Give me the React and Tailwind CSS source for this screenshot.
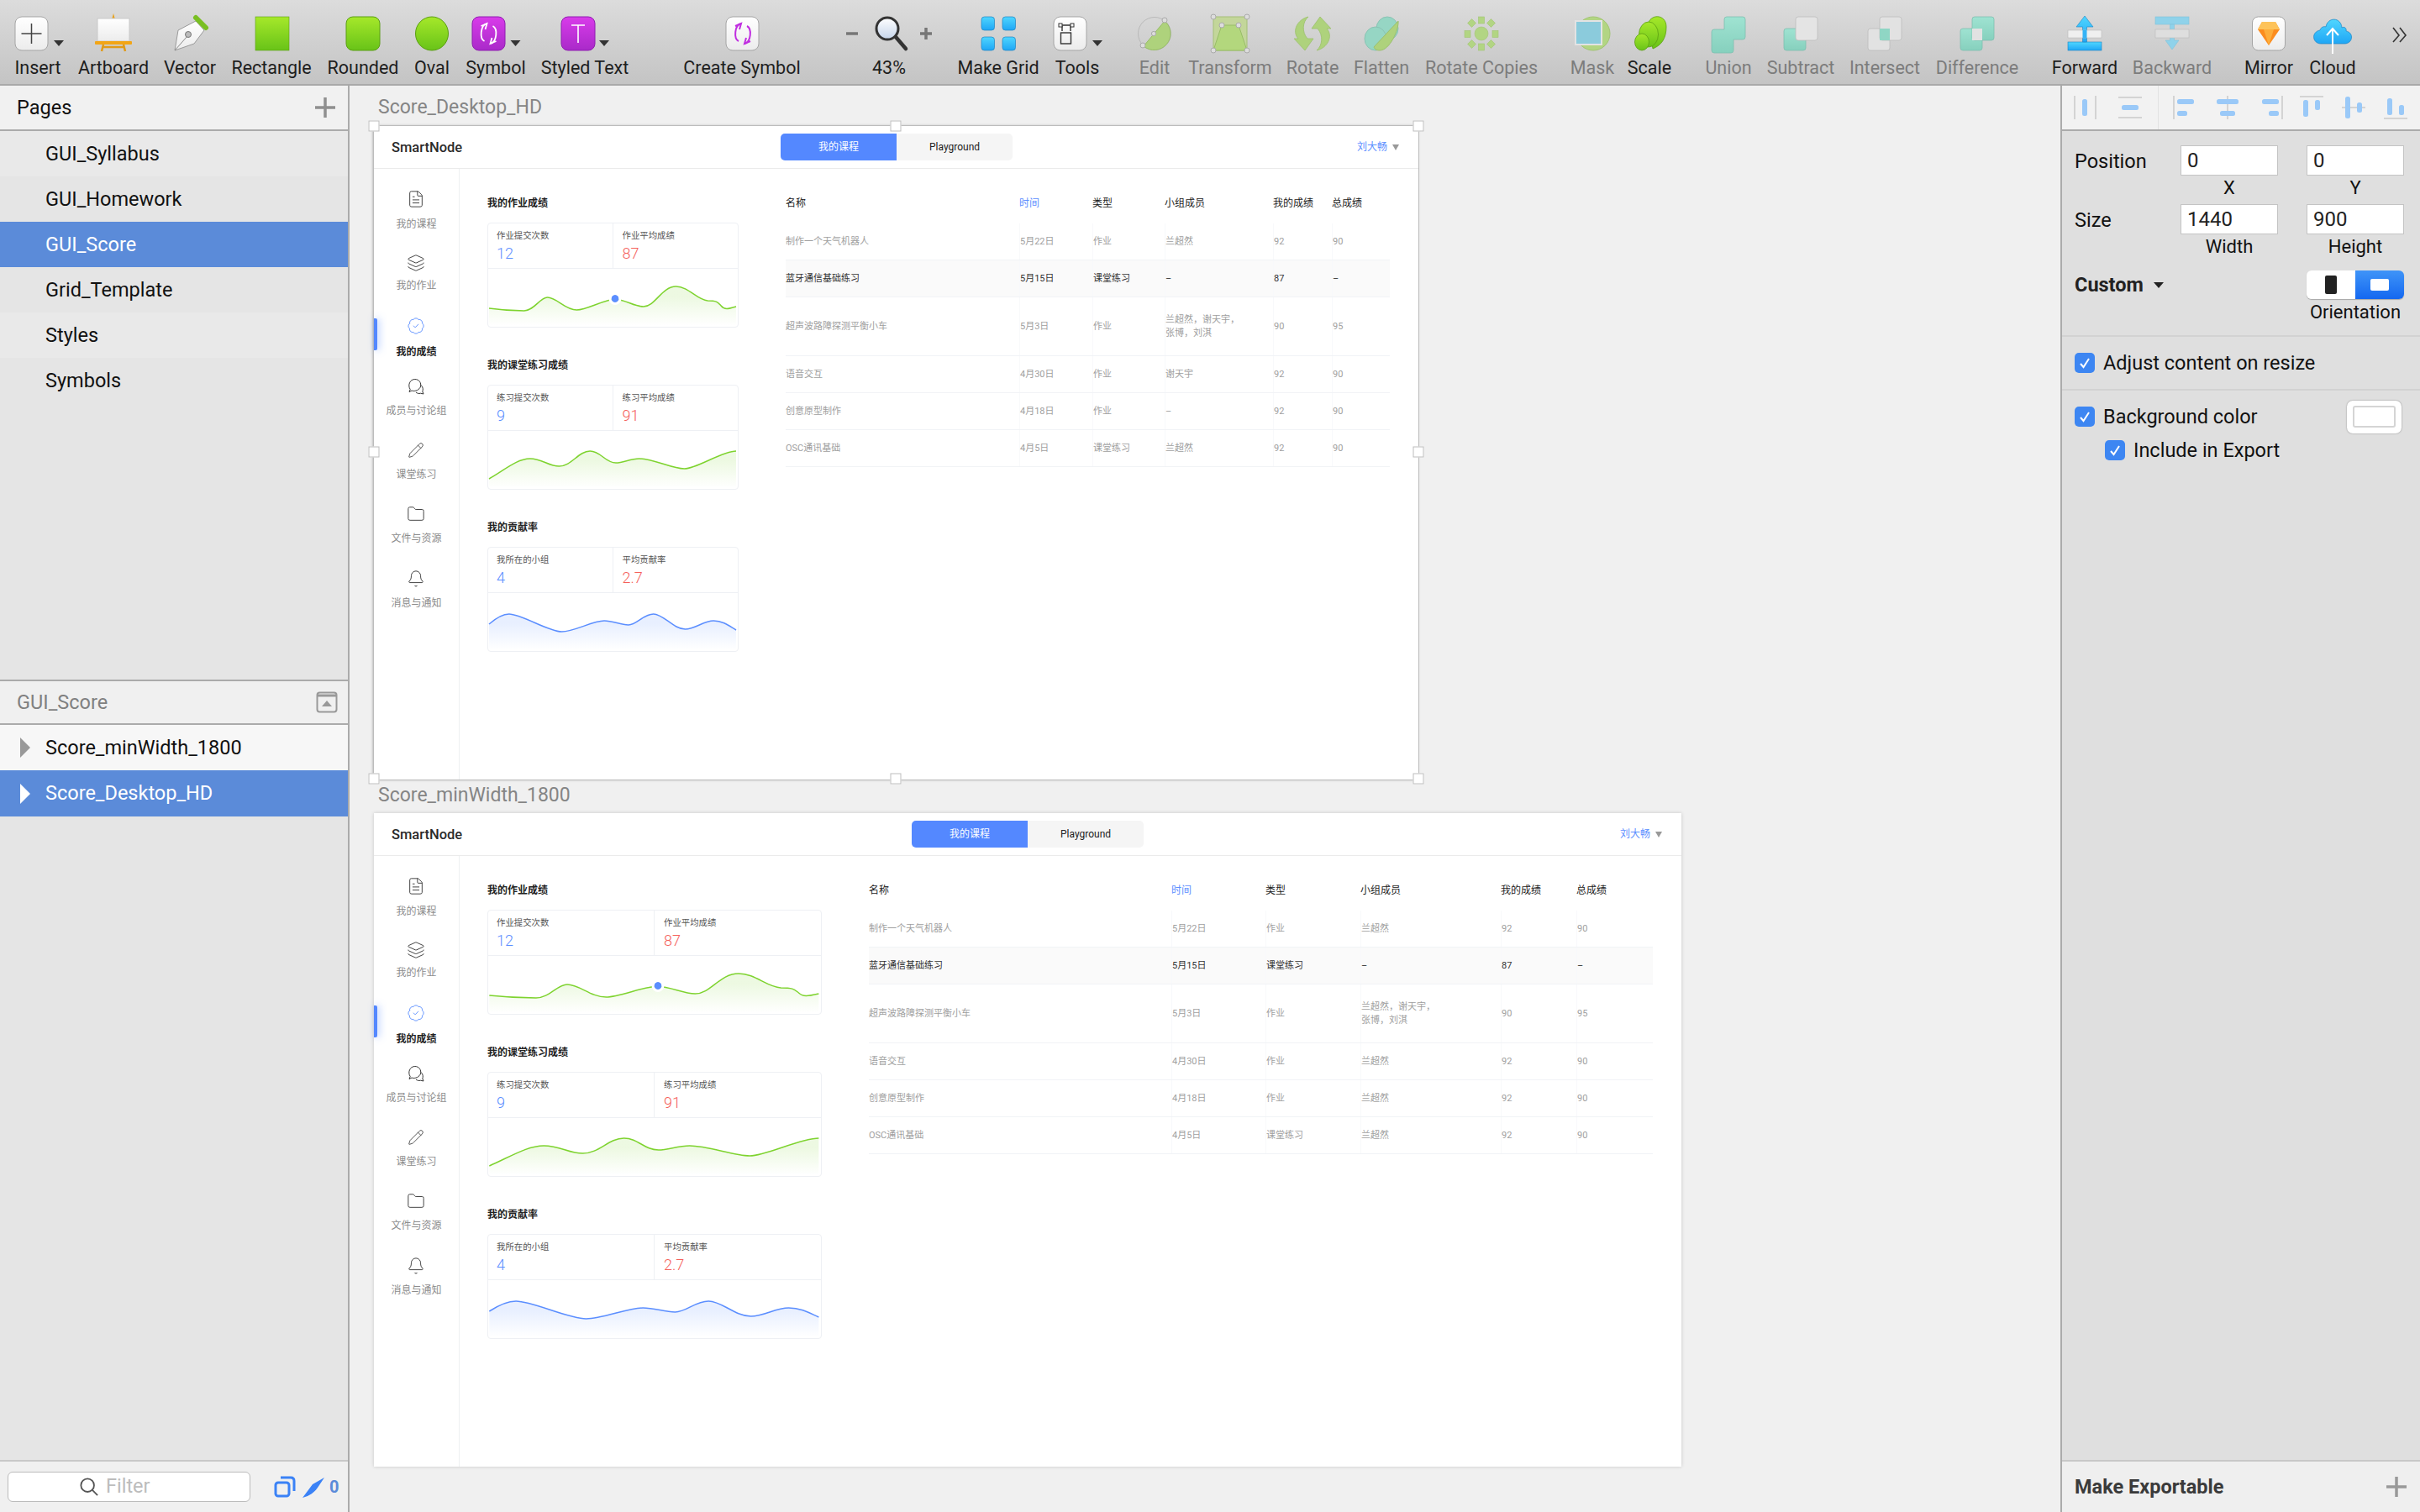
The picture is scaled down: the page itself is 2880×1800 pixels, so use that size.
import React from "react";
import { FileText, Layers, BadgeCheck, Pencil, Folder, Bell } from "lucide-react";

const Sync = ({ c = "#fff", x = 0, w = 1.8 }) => (
  <g transform={`translate(${x} 0)`} fill="none" stroke={c} strokeWidth={w}>
    <path d="M-2 -12 C-10 -10 -11 6 -5 9" />
    <path d="M-9 -9 L-2 -12 L-4 -5" strokeLinejoin="miter" />
    <path d="M2 12 C10 10 11 -6 5 -9" />
    <path d="M9 9 L2 12 L4 5" />
  </g>
);
const Arrow = ({ x }) => <path d={`M${x - 6} 8 h12 l-6 7 z`} fill="#333" />;
const WhiteBox = ({ x }) => <rect x={x} y="-20" width="39" height="40" rx="8" fill="url(#gWhite)" stroke="#a5a5a5" />;
const ROT = "M-5 -20 C-18 -17 -25 -3 -17 6 L-22 6 L-9 20 L1 6 L-6 6 C-13 -2 -12 -14 -5 -20 Z";

const tools = [
  { ml: "ml-[15px]", label: "Insert", icon: <><WhiteBox x={-27} /><path d="M-7.5 -12 V12 M-19.5 0 H4.5" stroke="#444" strokeWidth="1.5" /><Arrow x={25} /></> },
  { ml: "ml-[30px]", label: "Artboard", icon: <><path d="M0 -24 L2 -17 H-2 Z" fill="#e8a21e" /><rect x="-19" y="-18" width="38" height="27" fill="url(#gWhite)" stroke="#c9c9c9" /><rect x="-22" y="9" width="44" height="4" rx="1" fill="#f2a516" /><path d="M-12 13 L-14 21 M12 13 L14 21 M-12 16 H12" stroke="#e09a18" strokeWidth="2.5" fill="none" /></> },
  { ml: "ml-[31px]", label: "Vector", icon: <><path d="M-18 20 L-14 -4 L7 -15 L17 -4 L5 12 Z" fill="url(#gWhite)" stroke="#9a9a9a" /><path d="M-18 20 L-3 3" stroke="#8a8a8a" /><circle cx="-2" cy="1" r="3.5" fill="#bbb" stroke="#777" /><path d="M7 -19 L19 -7" stroke="#79bf22" strokeWidth="6" strokeLinecap="round" /></> },
  { ml: "ml-[37px]", label: "Rectangle", icon: <rect x="-19" y="-20" width="40" height="40" fill="url(#gGreen)" stroke="#5a9e12" strokeWidth="0.6" /> },
  { ml: "ml-[49px]", label: "Rounded", icon: <rect x="-20" y="-20" width="40" height="40" rx="8" fill="url(#gGreen)" stroke="#5a9e12" /> },
  { ml: "ml-[22px]", label: "Oval", icon: <ellipse cx="0" cy="0" rx="19.5" ry="20" fill="url(#gGreen)" stroke="#5a9e12" /> },
  { ml: "ml-[16px]", label: "Symbol", icon: <><rect x="-28" y="-20" width="39" height="40" rx="8" fill="url(#gPurple)" stroke="#8f1fb0" /><Sync x={-8.5} /><Arrow x={23.5} /></> },
  { ml: "ml-[46px]", label: "Styled Text", icon: <><rect x="-28" y="-20" width="40" height="40" rx="8" fill="url(#gPurple)" stroke="#8f1fb0" /><path d="M-16 -10 H0 M-8 -10 V11" stroke="#fff" strokeWidth="1.6" /><Arrow x={23} /></> },
  { ml: "ml-[127px]", label: "Create Symbol", icon: <><WhiteBox x={-19} /><Sync x={1} c="#c02ee0" w={2} /></> },
  { ml: "ml-[115px]", label: "43%", icon: <><path d="M-51 0 H-37" stroke="#777" strokeWidth="3.5" /><path d="M37 0 H51 M44 -7 V7" stroke="#777" strokeWidth="3.5" /><circle cx="-2" cy="-6" r="13" fill="url(#gLens)" stroke="#333" strokeWidth="3" /><path d="M8 4 L20 18" stroke="#333" strokeWidth="4.5" strokeLinecap="round" /></> },
  { ml: "ml-[70px]", label: "Make Grid", icon: <>{[[-20,-20],[5,-20],[-20,4],[5,4]].map(([x,y]) => <rect key={x+"_"+y} x={x} y={y} width="15.5" height="16" rx="3.5" fill="url(#gBlue)" stroke="#1d84c4" strokeWidth="0.7" />)}</> },
  { ml: "ml-[34px]", label: "Tools", icon: <><WhiteBox x={-28} /><path d="M-21 -10 H-4 M-18 -9 V-3 M-8 -9 V-3" stroke="#333" strokeWidth="1.4" fill="none" /><rect x="-19.5" y="-1" width="12" height="13" fill="none" stroke="#333" strokeWidth="1.4" /><rect x="-22" y="-12" width="4" height="4" fill="#fff" stroke="#333" /><rect x="-8" y="-12" width="4" height="4" fill="#fff" stroke="#333" /><Arrow x={24} /></> },
  { ml: "ml-[32px]", label: "Edit", dim: true, icon: <><circle r="19.5" fill="none" stroke="#b9b9b9" /><path d="M12 -15 A19.5 19.5 0 0 1 -13 15 Z" fill="#aed27c" stroke="#97bd66" /><circle cx="12" cy="-16" r="3" fill="#ddd" stroke="#aaa" /><circle cx="-1" cy="0" r="2.6" fill="#ddd" stroke="#aaa" /><circle cx="-14" cy="14" r="3" fill="#ddd" stroke="#aaa" /></> },
  { ml: "ml-[30px]", label: "Transform", dim: true, icon: <><rect x="-20" y="-20" width="40" height="40" fill="#c3d69a" stroke="#a5c078" /><path d="M-10 -10 H10 L20 20 H-20 Z" fill="#b3d77d" stroke="#98bd68" /><g fill="#ddd" stroke="#aaa">{[[-20,-20],[20,-20],[-10,-10],[10,-10],[-20,20],[20,20]].map(([x,y]) => <circle key={x+"_"+y} cx={x} cy={y} r="3" />)}</g></> },
  { ml: "ml-[38px]", label: "Rotate", dim: true, icon: <g fill="#aed27c" stroke="#9cc06d" strokeWidth="0.8"><path d={ROT} /><path d={ROT} transform="rotate(180)" /></g> },
  { ml: "ml-[22px]", label: "Flatten", dim: true, icon: <><ellipse cx="7" cy="-6" rx="13" ry="14" fill="#96d6c4" stroke="#8bc3b4" /><ellipse cx="-7" cy="6" rx="13" ry="14" fill="#96d6c4" stroke="#8bc3b4" /><path d="M20 -15 C21 -5 10 20 -2 20 C-7 20 -8 18 -9 16 Z" fill="#aed27c" stroke="#9cc06d" /></> },
  { ml: "ml-[59px]", label: "Rotate Copies", dim: true, icon: <g fill="#b2d583" stroke="#a2c573" strokeWidth="0.6"><circle r="8" /><rect x="-3.5" y="-20" width="7" height="8" /><rect x="-3.5" y="12" width="7" height="8" /><rect x="-20" y="-3.5" width="7" height="8" /><rect x="13" y="-3.5" width="7" height="8" /><rect x="-15" y="-16" width="7" height="7" transform="rotate(45 -11.5 -12.5)" /><rect x="8" y="-16" width="7" height="7" transform="rotate(45 11.5 -12.5)" /><rect x="-15" y="9" width="7" height="7" transform="rotate(45 -11.5 12.5)" /><rect x="8" y="9" width="7" height="7" transform="rotate(45 11.5 12.5)" /></g> },
  { ml: "ml-[72px]", label: "Mask", dim: true, icon: <><circle cx="1" r="20" fill="#b2d583" stroke="#a2c573" /><rect x="-20" y="-15" width="31" height="28" fill="#8bcbdc" stroke="#e3e3e3" strokeWidth="2" /></> },
  { ml: "ml-[8px]", label: "Scale", icon: <g fill="url(#gGreen)" stroke="#5a9e12" strokeWidth="0.8"><path d="M-2 -10 C0 -24 20 -24 20 -8 C20 6 14 14 4 18 Z" /><ellipse cx="-1" cy="1" rx="11.5" ry="15" /><ellipse cx="-9" cy="10" rx="8.5" ry="10" /></g> },
  { ml: "ml-[34px]", label: "Union", dim: true, icon: <path d="M-5 -17 q0 -3 3 -3 h19 q3 0 3 3 v21 q0 3 -3 3 h-11 v13 q0 3 -3 3 h-20 q-3 0 -3 -3 v-22 q0 -3 3 -3 h12 z" fill="url(#gTeal)" stroke="#7fbfb0" strokeWidth="0.8" /> },
  { ml: "ml-[26px]", label: "Subtract", dim: true, icon: <><rect x="-20" y="-6" width="26" height="26" rx="3" fill="url(#gTeal)" stroke="#7fbfb0" strokeWidth="0.8" /><rect x="-6" y="-20" width="26" height="28" rx="3" fill="#e4e4e4" stroke="#bdbdbd" strokeWidth="0.8" /></> },
  { ml: "ml-[40px]", label: "Intersect", dim: true, icon: <><rect x="-20" y="-6" width="26" height="26" rx="3" fill="#e2e2e2" stroke="#bdbdbd" strokeWidth="0.8" /><rect x="-6" y="-20" width="26" height="28" rx="3" fill="#e2e2e2" stroke="#bdbdbd" strokeWidth="0.8" /><rect x="-6" y="-6" width="12" height="14" fill="#8fd6c4" /></> },
  { ml: "ml-[50px]", label: "Difference", dim: true, icon: <><rect x="-20" y="-6" width="26" height="26" rx="3" fill="url(#gTeal)" stroke="#7fbfb0" strokeWidth="0.8" /><rect x="-6" y="-20" width="26" height="28" rx="3" fill="url(#gTeal)" stroke="#7fbfb0" strokeWidth="0.8" /><rect x="-6" y="-6" width="12" height="14" fill="#e2e2e2" /></> },
  { ml: "ml-[68px]", label: "Forward", icon: <><rect x="-20" y="10" width="40" height="10" fill="url(#gBlue)" stroke="#1d84c4" strokeWidth="0.6" /><path d="M-2.5 10 V-8 H-10 L0 -21 L10 -8 H2.5 V10 Z" fill="url(#gBlue)" stroke="#1d84c4" strokeWidth="0.6" /><rect x="-20" y="-4" width="40" height="9" fill="#efefef" stroke="#bbb" strokeWidth="0.6" /><rect x="-2.5" y="-4" width="5" height="9" fill="#35b3f6" /></> },
  { ml: "ml-[44px]", label: "Backward", dim: true, icon: <><rect x="-20" y="-20" width="40" height="9" fill="#8fd2ea" stroke="#7fc2da" strokeWidth="0.6" /><path d="M-2.5 -11 V8 H-8 L0 19 L8 8 H2.5 V-11 Z" fill="#8fd2ea" stroke="#7fc2da" strokeWidth="0.6" /><rect x="-20" y="-5" width="40" height="10" fill="#dedede" stroke="#bbb" strokeWidth="0.6" /></> },
  { ml: "ml-[55px]", label: "Mirror", icon: <><rect x="-19.5" y="-20" width="39" height="40" rx="7" fill="url(#gWhite)" stroke="#a5a5a5" /><path d="M-8 -14 H8 L13 -5 L0 14 L-13 -5 Z" fill="#fb8c1e" /><path d="M-8 -14 H8 L13 -5 H-13 Z" fill="#fdc35a" /><path d="M-6 -5 H6 L0 14 Z" fill="#fdad3a" /></> },
  { ml: "ml-[16px]", label: "Cloud", icon: <><path d="M-14 12 C-24 12 -26 -2 -15 -4 C-14 -8 -10 -9 -8 -8 C-6 -20 10 -20 11 -7 C14 -9 17 -6 16 -3 C26 -1 24 12 14 12 Z" fill="url(#gBlue)" stroke="#1d84c4" strokeWidth="0.7" /><path d="M0 24 V-6 M-7 2 L0 -6 L7 2" fill="none" stroke="#fff" strokeWidth="2" /></> },
  { ml: "ml-[20px]", label: "", icon: <path d="M-8 -7 L-1 2 L-8 10 M0 -7 L7 2 L0 10" fill="none" stroke="#333" strokeWidth="1.6" /> },
];

const Tool = ({ t }) => (
  <div className={`flex w-[60px] shrink-0 flex-col items-center pt-[16px] ${t.ml}`}>
    <svg width="110" height="48" viewBox="-55 -24 110 48" className="shrink-0 overflow-visible">{t.icon}</svg>
    <div className={`mt-[4px] h-[26px] whitespace-nowrap text-[21.5px] leading-[26px] ${t.dim ? "text-[#7c7c7c]" : "text-[#1e1e1e]"}`}>{t.label}</div>
  </div>
);

const ChatIcon = () => (
  <svg width="22" height="22" viewBox="0 0 22 22" fill="none" stroke="#333" strokeWidth="1">
    <path d="M3 17.5 L4.2 14.5 C1 10 3.5 2.5 9.8 2.5 C15 2.5 17.5 7 16.5 11 C15.5 15 10 17.5 6 16 Z" />
    <path d="M17 9.5 C19.5 11.5 19.8 15 18.8 17 L20 20 L16.5 19.2 C14.5 19.8 12.5 19.3 11 18" />
  </svg>
);

const navs = [
  { mt: "mt-[25px]", gap: "mt-[11px]", label: "我的课程", icon: <FileText size={22} strokeWidth={1} color="#333" /> },
  { mt: "mt-[27px]", gap: "mt-[8px]", label: "我的作业", icon: <Layers size={22} strokeWidth={1} color="#333" /> },
  { mt: "mt-[29px]", gap: "mt-[12px]", label: "我的成绩", active: true, icon: <BadgeCheck size={22} strokeWidth={1} color="#5b8eff" /> },
  { mt: "mt-[22px]", gap: "mt-[10px]", label: "成员与讨论组", icon: <ChatIcon /> },
  { mt: "mt-[28px]", gap: "mt-[10px]", label: "课堂练习", icon: <Pencil size={20} strokeWidth={1} color="#333" /> },
  { mt: "mt-[28px]", gap: "mt-[10px]", label: "文件与资源", icon: <Folder size={22} strokeWidth={1} color="#333" /> },
  { mt: "mt-[29px]", gap: "mt-[10px]", label: "消息与通知", icon: <Bell size={22} strokeWidth={1} color="#333" /> },
];

const LINE_A = "M1 47 C15 49 30 50 43 50 C55 50 62 34 71 34 C82 34 92 49 106 49 C118 49 138 37 152 36 C165 37 175 45 186 45 C200 45 208 21 225 21 C240 21 250 37 263 38 C275 38 275 40 279 44 C283 49 287 48 297 45";
const LINE_B = "M1 57 C20 46 35 33 50 33 C65 33 72 42 85 42 C100 42 108 24 122 24 C135 24 140 38 153 38 C162 38 170 33 181 33 C198 33 220 45 235 45 C250 45 280 24 297 24";
const LINE_C = "M1 37 C8 31 16 25 25 25 C40 25 72 46 88 46 C103 46 125 33 139 33 C150 33 158 38 168 38 C178 38 186 25 198 25 C210 25 222 43 236 43 C248 43 258 33 270 33 C282 33 290 40 297 44";

const Chart = ({ d, color, grad, dot }) => (
  <div className="relative h-[71px] w-full">
    <svg viewBox="0 0 299 71" preserveAspectRatio="none" className="block h-full w-full">
      <path d={`${d} L297 70 L1 70 Z`} fill={`url(#${grad})`} />
      <path d={d} fill="none" stroke={color} strokeWidth="1.5" vectorEffect="non-scaling-stroke" />
    </svg>
    {dot && <div className="absolute left-[51%] top-[31px] h-[9px] w-[9px] -translate-x-1/2 rounded-full bg-[#5b8eff] outline-3 outline-white" />}
  </div>
);

const Card = ({ title, a, b, v1, v2, d, color, grad, dot, top }) => (
  <div className={top}>
    <div className="h-[16px] text-[12px] font-bold leading-[16px] text-[#222]">{title}</div>
    <div className="mt-[15px] h-[125px] overflow-hidden rounded-[4px] border border-[#eef0f4]">
      <div className="flex h-[54px] border-b border-[#eef0f4]">
        <div className="flex-1 border-r border-[#eef0f4] pl-[10px] pt-[8px]">
          <div className="h-[14px] text-[10.4px] leading-[14px] text-[#555]">{a}</div>
          <div className="mt-[2px] text-[18px] font-light leading-[24px] text-[#5b8eff]">{v1}</div>
        </div>
        <div className="flex-1 pl-[11px] pt-[8px]">
          <div className="h-[14px] text-[10.4px] leading-[14px] text-[#555]">{b}</div>
          <div className="mt-[2px] text-[18px] font-light leading-[24px] text-[#f5605a]">{v2}</div>
        </div>
      </div>
      <Chart d={d} color={color} grad={grad} dot={dot} />
    </div>
  </div>
);

const rows = (alt) => [
  { h: "h-[44px]", c: ["制作一个天气机器人", "5月22日", "作业", "兰超然", "92", "90"] },
  { h: "h-[44px]", hi: true, c: ["蓝牙通信基础练习", "5月15日", "课堂练习", "–", "87", "–"] },
  { h: "h-[70px]", c: ["超声波路障探测平衡小车", "5月3日", "作业", "兰超然，谢天宇，\n张博，刘淇", "90", "95"] },
  { h: "h-[44px]", c: ["语音交互", "4月30日", "作业", alt ? "兰超然" : "谢天宇", "92", "90"] },
  { h: "h-[44px]", c: ["创意原型制作", "4月18日", "作业", alt ? "兰超然" : "–", "92", "90"] },
  { h: "h-[44px]", c: ["OSC通讯基础", "4月5日", "课堂练习", "兰超然", "92", "90"] },
];
const heads = ["名称", "时间", "类型", "小组成员", "我的成绩", "总成绩"];

const Table = ({ cols, alt }) => (
  <div className="flex-1 pl-[56px] pr-[34px] pt-[33px]">
    <div className="flex h-[16px] items-center">
      {heads.map((h, i) => (
        <div key={h} className={`${cols[i]} shrink-0 text-[12px] leading-[16px] ${i === 1 ? "text-[#5b8eff]" : "text-[#222]"}`}>{h}</div>
      ))}
    </div>
    <div className="mt-[16px]">
      {rows(alt).map((r) => (
        <div key={r.c[0]} className={`flex border-b border-[#f1f3f6] ${r.h} ${r.hi ? "bg-[#fafafa] text-[#333]" : "text-[#a0a0a0]"}`}>
          {r.c.map((t, i) => (
            <div key={i} className={`${cols[i]} flex shrink-0 items-center whitespace-pre-line text-[11px] leading-[16px] ${i > 0 ? "border-l border-[#f8f9fb]" : ""}`}>{t}</div>
          ))}
        </div>
      ))}
    </div>
  </div>
);

const Handle = ({ pos }) => <div className={`absolute h-[13px] w-[13px] -translate-x-1/2 -translate-y-1/2 border border-[#bdbdbd] bg-white ${pos}`} />;

const Artboard = ({ box, name, nameBox, cardW, dashW, tabMl, cols, alt, id, selected }) => (
  <>
    <div className={`absolute whitespace-nowrap text-[23px] leading-[28px] text-[#858585] ${nameBox}`}>{name}</div>
    <div className={`absolute h-[778px] bg-white ${box} ${selected ? "shadow-[0_0_0_1px_#bcbcbc,-1px_0_3px_#999]" : "shadow-[0_0_4px_rgba(0,0,0,0.18)]"}`}>
      <div className="relative flex h-[51px] items-center border-b border-[#ebebeb]">
        <div className="ml-[21px] w-[86px] whitespace-nowrap pt-[1px] text-[16.5px] font-medium leading-[20px] text-[#2b2b2b]">SmartNode</div>
        <div className={`flex h-[32px] ${tabMl} text-[12px]`}>
          <div className="flex w-[138px] items-center justify-center rounded-l-[5px] bg-[#5488ff] text-white">我的课程</div>
          <div className="flex w-[138px] items-center justify-center rounded-r-[5px] bg-[#f5f5f5] text-[#222]">Playground</div>
        </div>
        <div className="ml-auto mr-[23px] flex items-center gap-[6px] text-[12px] text-[#5b8eff]">
          刘大畅
          <span className="h-0 w-0 border-x-[4px] border-t-[7px] border-x-transparent border-t-[#999]" />
        </div>
      </div>
      <div className="flex h-[727px]">
        <div className="relative flex w-[102px] shrink-0 flex-col items-center border-r border-[#eef0f2]">
          <div className="absolute left-0 top-[178px] h-[38px] w-[4px] rounded-r-[2px] bg-[#5488ff] shadow-[2px_0_8px_rgba(84,136,255,0.5)]" />
          {navs.map((n) => (
            <div key={n.label} className={`flex flex-col items-center ${n.mt}`}>
              <div className="flex h-[22px] w-[22px] items-center justify-center">{n.icon}</div>
              <div className={`${n.gap} h-[16px] whitespace-nowrap text-[12px] leading-[16px] ${n.active ? "font-bold text-[#222]" : "text-[#8c8c8c]"}`}>{n.label}</div>
            </div>
          ))}
        </div>
        <div className={`ml-[33px] shrink-0 pt-[33px] ${cardW}`}>
          <Card title="我的作业成绩" a="作业提交次数" b="作业平均成绩" v1="12" v2="87" d={LINE_A} color="#7ed32f" grad="gGreenFill" dot />
          <Card top="mt-[37px]" title="我的课堂练习成绩" a="练习提交次数" b="练习平均成绩" v1="9" v2="91" d={LINE_B} color="#7ed32f" grad="gGreenFill" />
          <Card top="mt-[37px]" title="我的贡献率" a="我所在的小组" b="平均贡献率" v1="4" v2="2.7" d={LINE_C} color="#5b8eff" grad="gBlueFill" />
        </div>
        <Table cols={cols} alt={alt} />
      </div>
    </div>
    {selected && ["left-[29px] top-[48px]", "left-[650px] top-[48px]", "left-[1272px] top-[48px]", "left-[29px] top-[436px]", "left-[1272px] top-[436px]", "left-[29px] top-[825px]", "left-[650px] top-[825px]", "left-[1272px] top-[825px]"].map((p) => <Handle key={p} pos={p} />)}
  </>
);

const Chk = () => (
  <span className="flex h-[24px] w-[24px] shrink-0 items-center justify-center rounded-[5px] bg-[#3d86f2]">
    <svg width="16" height="16" viewBox="0 0 16 16" fill="none" stroke="#fff" strokeWidth="2"><path d="M3 9 L6.5 13 L13 3" /></svg>
  </span>
);

const Field = ({ v }) => <div className="flex h-[36px] w-[116px] items-center border border-[#c4c4c4] bg-white pl-[7px] text-[24px] text-[#222]">{v}</div>;

const bar = "#9ac9f8";
const line = "#b5b5b5";
const aligns = [
  { ml: "ml-[14px]", i: <><path d="M1 0 V28 M26 0 V28" stroke={line} /><rect x="10" y="4" width="6" height="20" rx="2.5" fill={bar} /></> },
  { ml: "ml-[25px]", i: <><path d="M0 2 H28 M0 26 H28" stroke={line} strokeWidth="1.2" /><rect x="4" y="11" width="20" height="6" rx="2.5" fill={bar} /></> },
  { ml: "ml-[17px]", i: <><path d="M1 0 V28" stroke={line} /><rect x="5" y="4" width="20" height="6" rx="2.5" fill={bar} /><rect x="5" y="18" width="12" height="6" rx="2.5" fill={bar} /></>, sep: true },
  { ml: "ml-[23px]", i: <><path d="M14 0 V28" stroke={line} /><rect x="1" y="4" width="26" height="6" rx="2.5" fill={bar} /><rect x="5" y="18" width="18" height="6" rx="2.5" fill={bar} /></> },
  { ml: "ml-[24px]", i: <><path d="M27 0 V28" stroke={line} /><rect x="3" y="4" width="20" height="6" rx="2.5" fill={bar} /><rect x="11" y="18" width="12" height="6" rx="2.5" fill={bar} /></> },
  { ml: "ml-[20px]", i: <><path d="M0 1 H28" stroke={line} /><rect x="4" y="5" width="6" height="20" rx="2.5" fill={bar} /><rect x="18" y="5" width="6" height="12" rx="2.5" fill={bar} /></> },
  { ml: "ml-[22px]", i: <><path d="M0 14 H28" stroke={line} /><rect x="4" y="1" width="6" height="26" rx="2.5" fill={bar} /><rect x="18" y="8" width="6" height="12" rx="2.5" fill={bar} /></> },
  { ml: "ml-[22px]", i: <><path d="M0 27 H28" stroke={line} /><rect x="4" y="3" width="6" height="20" rx="2.5" fill={bar} /><rect x="18" y="11" width="6" height="12" rx="2.5" fill={bar} /></> },
];

const pages = ["GUI_Syllabus", "GUI_Homework", "GUI_Score", "Grid_Template", "Styles", "Symbols"];

export default function App() {
  return (
    <div className="flex h-[1800px] w-[2880px] flex-col overflow-hidden bg-[#f0f0f0] font-['Roboto','Noto_Sans_CJK_SC',sans-serif] text-[#111]">
      <svg className="absolute h-0 w-0">
        <defs>
          <linearGradient id="gWhite" x1="0" y1="0" x2="0" y2="1"><stop offset="0" stopColor="#ffffff" /><stop offset="1" stopColor="#ececec" /></linearGradient>
          <linearGradient id="gGreen" x1="0" y1="0" x2="0" y2="1"><stop offset="0" stopColor="#a6e82a" /><stop offset="1" stopColor="#68c318" /></linearGradient>
          <linearGradient id="gPurple" x1="0" y1="0" x2="0" y2="1"><stop offset="0" stopColor="#d93bea" /><stop offset="1" stopColor="#a92ac9" /></linearGradient>
          <linearGradient id="gBlue" x1="0" y1="0" x2="0" y2="1"><stop offset="0" stopColor="#4fd6ff" /><stop offset="1" stopColor="#1fa6f5" /></linearGradient>
          <linearGradient id="gTeal" x1="0" y1="0" x2="0" y2="1"><stop offset="0" stopColor="#9fe3d2" /><stop offset="1" stopColor="#86d0bd" /></linearGradient>
          <linearGradient id="gLens" x1="0" y1="0" x2="0" y2="1"><stop offset="0" stopColor="#ffffff" /><stop offset="1" stopColor="#c5d4ea" /></linearGradient>
          <linearGradient id="gGreenFill" x1="0" y1="0" x2="0" y2="1"><stop offset="0.25" stopColor="#7ed32f" stopOpacity="0.14" /><stop offset="0.95" stopColor="#7ed32f" stopOpacity="0" /></linearGradient>
          <linearGradient id="gBlueFill" x1="0" y1="0" x2="0" y2="1"><stop offset="0.25" stopColor="#5b8eff" stopOpacity="0.14" /><stop offset="0.95" stopColor="#5b8eff" stopOpacity="0" /></linearGradient>
        </defs>
      </svg>

      <div className="flex h-[102px] shrink-0 border-b-2 border-[#a9a9a9] bg-gradient-to-b from-[#dcdcdc] to-[#c4c4c4]">
        {tools.map((t) => <Tool key={t.label + t.ml} t={t} />)}
      </div>

      <div className="flex min-h-0 flex-1">
        <div className="flex w-[416px] shrink-0 flex-col border-r-2 border-[#ababab] bg-[#e5e5e5] text-[23.5px]">
          <div className="flex h-[54px] shrink-0 items-center justify-between border-b-2 border-[#ababab] bg-[#f1f1f1] pl-[20px] pr-[14px]">
            <span className="pt-[1px]">Pages</span>
            <svg width="26" height="26" viewBox="0 0 26 26"><path d="M13 1 V25 M1 13 H25" stroke="#8f8f8f" strokeWidth="3.5" /></svg>
          </div>
          {pages.map((p, i) => (
            <div key={p} className={`flex h-[54px] shrink-0 items-center pl-[54px] pt-[2px] ${i === 2 ? "bg-[#5b8bd9] text-white" : i % 2 === 0 ? "bg-[#e9e9e9]" : "bg-[#e5e5e5]"}`}>{p}</div>
          ))}
          <div className="h-[329px] shrink-0" />
          <div className="flex h-[54px] shrink-0 items-center justify-between border-y-2 border-[#ababab] bg-[#f0f0f0] pl-[20px] pr-[12px] text-[#808080]">
            <span className="pt-[1px]">GUI_Score</span>
            <svg width="26" height="26" viewBox="0 0 26 26" fill="none"><rect x="1.5" y="1.5" width="23" height="23" rx="3" stroke="#999" strokeWidth="2" /><path d="M1.5 5 H24.5" stroke="#999" strokeWidth="3" /><path d="M7 18 H19 L13 11 Z" fill="#999" /></svg>
          </div>
          <div className="flex h-[54px] shrink-0 items-center bg-[#f7f7f7] pl-[24px]">
            <span className="h-0 w-0 border-y-[12px] border-l-[12px] border-y-transparent border-l-[#999]" />
            <span className="ml-[18px] pt-[1px]">Score_minWidth_1800</span>
          </div>
          <div className="flex h-[55px] shrink-0 items-center bg-[#5b8bd9] pl-[24px] text-white">
            <span className="h-0 w-0 border-y-[12px] border-l-[12px] border-y-transparent border-l-white" />
            <span className="ml-[18px] pt-[1px]">Score_Desktop_HD</span>
          </div>
          <div className="flex-1" />
          <div className="flex h-[62px] shrink-0 items-center border-t-2 border-[#c8c8c8] bg-[#f0f0f0] pl-[9px]">
            <div className="flex h-[36px] w-[289px] items-center rounded-[6px] border border-[#bcbcbc] bg-white pl-[85px] text-[#bcbcbc]">
              <svg width="22" height="22" viewBox="0 0 24 24" fill="none" stroke="#555" strokeWidth="2"><circle cx="10" cy="10" r="8.5" /><path d="M16 16 L23 23" /></svg>
              <span className="ml-[9px]">Filter</span>
            </div>
            <svg className="ml-[28px]" width="26" height="26" viewBox="0 0 26 26" fill="none" stroke="#3b82f6" strokeWidth="3"><rect x="2" y="8" width="16" height="16" rx="3" /><path d="M8 2 H20 Q24 2 24 6 V18" /></svg>
            <svg className="ml-[8px]" width="26" height="26" viewBox="0 0 26 26"><path d="M0 26 C8 24 14 20 18 14 L26 2 L12 10 C8 15 4 21 0 26 Z" fill="#3b82f6" /></svg>
            <span className="ml-[6px] text-[20px] font-bold text-[#5b8bd9]">0</span>
          </div>
        </div>

        <div className="relative min-w-0 flex-1">
          <Artboard selected name="Score_Desktop_HD" nameBox="left-[34px] top-[12px]" box="left-[29px] top-[48px] w-[1243px]" cardW="w-[299px]" tabMl="ml-[377px]" cols={["w-[278px]", "w-[87px]", "w-[86px]", "w-[129px]", "w-[70px]", "w-[69px]"]} />
          <Artboard alt name="Score_minWidth_1800" nameBox="left-[34px] top-[831px]" box="left-[29px] top-[866px] w-[1556px]" cardW="w-[398px]" tabMl="ml-[533px]" cols={["w-[360px]", "w-[112px]", "w-[113px]", "w-[167px]", "w-[90px]", "w-[89px]"]} />
        </div>

        <div className="flex w-[428px] shrink-0 flex-col border-l-2 border-[#ababab] bg-[#dfdfdf] text-[23.5px] leading-[28px]">
          <div className="flex h-[54px] shrink-0 items-center border-b-2 border-[#ababab] bg-[#f2f2f2]">
            {aligns.map((a, i) => (
              <React.Fragment key={i}>
                {a.sep && <span className="ml-[19px] w-px self-stretch bg-[#e2e2e2]" />}
                <svg className={`shrink-0 ${a.ml}`} width="28" height="28" viewBox="0 0 28 28">{a.i}</svg>
              </React.Fragment>
            ))}
          </div>
          <div className="flex flex-col border-b-2 border-[#d2d2d2] pb-[15px] pl-[15px] pr-[19px] pt-[17px]">
            <div className="flex items-center"><span className="w-[126px] pt-[1px]">Position</span><Field v="0" /><span className="w-[34px]" /><Field v="0" /></div>
            <div className="flex h-[24px] pl-[126px] text-center text-[22px] leading-[28px]"><span className="mt-[1px] w-[116px]">X</span><span className="ml-[34px] mt-[1px] w-[116px]">Y</span></div>
            <div className="mt-[10px] flex items-center"><span className="w-[126px] pt-[1px]">Size</span><Field v="1440" /><span className="w-[34px]" /><Field v="900" /></div>
            <div className="flex h-[24px] pl-[126px] text-center text-[22px] leading-[28px]"><span className="mt-[1px] w-[116px]">Width</span><span className="ml-[34px] mt-[1px] w-[116px]">Height</span></div>
            <div className="mt-[19px] flex items-center">
              <span className="font-bold text-[#222]">Custom</span>
              <span className="ml-[12px] h-0 w-0 border-x-[6px] border-t-[7px] border-x-transparent border-t-[#222]" />
              <div className="ml-auto flex h-[34px] w-[116px] overflow-hidden rounded-[6px] shadow-[0_1px_1px_rgba(0,0,0,0.25)]">
                <div className="flex flex-1 items-center justify-center bg-white"><span className="h-[22px] w-[14px] rounded-[2px] bg-[#222]" /></div>
                <div className="flex flex-1 items-center justify-center bg-gradient-to-b from-[#3f94f8] to-[#1467f0]"><span className="h-[14px] w-[22px] rounded-[2px] bg-white" /></div>
              </div>
            </div>
            <div className="mt-[2px] h-[26px] w-[116px] self-end whitespace-nowrap text-center text-[22px] leading-[28px]">Orientation</div>
          </div>
          <div className="flex h-[64px] items-center gap-[10px] border-b-2 border-[#d2d2d2] px-[15px]"><Chk /><span>Adjust content on resize</span></div>
          <div className="flex h-[62px] items-center gap-[10px] px-[15px]">
            <Chk /><span>Background color</span>
            <div className="ml-auto mr-[7px] flex h-[39px] w-[65px] items-center justify-center rounded-[7px] bg-white shadow-[0_0_2px_rgba(0,0,0,0.4)]"><span className="h-[26px] w-[51px] rounded-[3px] border-2 border-[#d5d5d5] bg-white" /></div>
          </div>
          <div className="-mt-[3px] flex h-[24px] items-center gap-[10px] pl-[51px]"><Chk /><span>Include in Export</span></div>
          <div className="flex-1" />
          <div className="flex h-[62px] shrink-0 items-center justify-between border-t-2 border-[#c8c8c8] bg-[#efefef] pl-[15px] pr-[15px]">
            <span className="font-bold text-[#3a3a3a]">Make Exportable</span>
            <svg width="26" height="26" viewBox="0 0 26 26"><path d="M13 1 V25 M1 13 H25" stroke="#999" strokeWidth="3.5" /></svg>
          </div>
        </div>
      </div>
    </div>
  );
}
